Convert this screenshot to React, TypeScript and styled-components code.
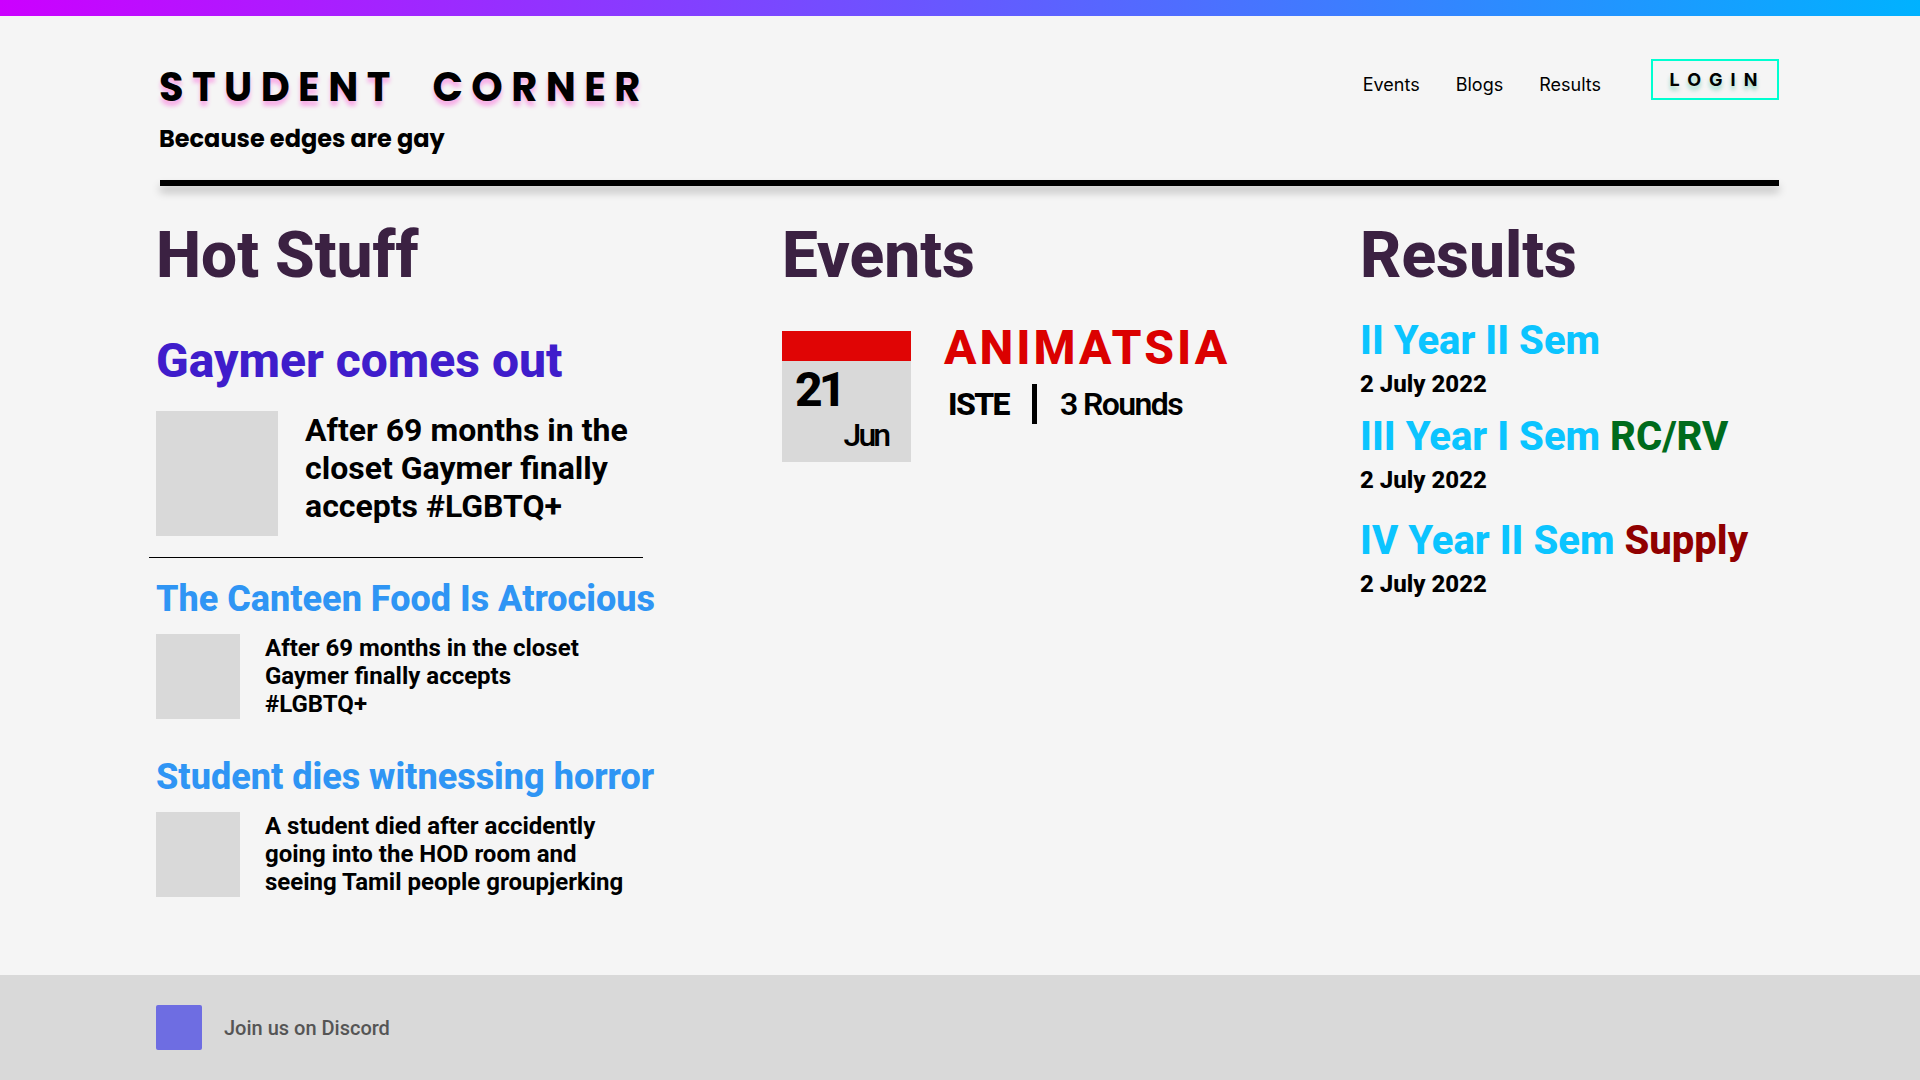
import React from "react";
import styled, { createGlobalStyle } from "styled-components";

const GlobalStyle = createGlobalStyle`
  *, *::before, *::after { box-sizing: border-box; }
  body { margin: 0; background: #f5f5f5; color: #000; font-family: Roboto, "Liberation Sans", sans-serif; }
  h1, h2, h3, p { margin: 0; }
  a { color: inherit; text-decoration: none; }
`;

const Page = styled.div`
  display: flex;
  flex-direction: column;
  min-height: 100vh;
`;

const TopBar = styled.div`
  height: 16px;
  background: linear-gradient(90deg, #cc00ff, #00b2ff);
`;

const Header = styled.header`
  display: flex;
  justify-content: space-between;
  align-items: flex-start;
  margin: 0 141px 0 159px;
  padding: 43px 0 24px;
`;

const HeaderRule = styled.div`
  height: 6px;
  margin: 0 141px 0 160px;
  background: #000;
  box-shadow: 0 6px 8px rgba(0, 0, 0, 0.25);
`;

const Brand = styled.div`
  font-family: Poppins, Inter, "Liberation Sans", sans-serif;
`;

const SiteTitle = styled.h1`
  font-size: 40px;
  line-height: 56px;
  font-weight: 700;
  letter-spacing: 0.21em;
  white-space: pre;
  text-shadow: 0 5px 4px rgba(255, 0, 199, 0.3);
`;

const Tagline = styled.p`
  margin-top: 7px;
  font-size: 24px;
  line-height: 34px;
  font-weight: 700;
`;

const Nav = styled.nav`
  display: flex;
  align-items: flex-start;
  font-family: Inter, "Liberation Sans", sans-serif;
  font-size: 18px;
`;

const NavLinks = styled.div`
  display: flex;
  gap: 36px;
  margin-right: 50px;
  padding-top: 14px;
  line-height: 24px;
  font-weight: 400;
`;

const LoginButton = styled.button`
  width: 128px;
  height: 41px;
  padding: 0 0 0 5px;
  border: 2px solid #00ffd1;
  background: transparent;
  color: #000;
  font: 700 18px/24px Inter, "Liberation Sans", sans-serif;
  letter-spacing: 8px;
  text-shadow: 0 4px 4px rgba(0, 170, 130, 0.4);
  cursor: pointer;
`;

const Main = styled.main`
  display: grid;
  grid-template-columns: 626fr 578fr 419fr;
  margin: 0 141px 0 156px;
  padding: 32px 0 78px;
`;

const Column = styled.section`
  min-width: 0;
`;

const SectionTitle = styled.h2`
  font-size: 64px;
  line-height: 76px;
  font-weight: 800;
  color: #3b2142;
`;

const Article = styled.article<{ $lead?: boolean }>`
  margin-top: ${(p) => (p.$lead ? 39 : 37)}px;
  hr + & { margin-top: 20px; }
`;

const Headline = styled.h3<{ $lead?: boolean }>`
  font-size: ${(p) => (p.$lead ? 48 : 36)}px;
  line-height: ${(p) => (p.$lead ? 56 : 42)}px;
  font-weight: 800;
  color: ${(p) => (p.$lead ? "#3f1dcb" : "#2f95f4")};
  white-space: nowrap;
`;

const Story = styled.div<{ $lead?: boolean }>`
  display: flex;
  align-items: flex-start;
  gap: ${(p) => (p.$lead ? 27 : 25)}px;
  margin-top: ${(p) => (p.$lead ? 22 : 14)}px;
`;

const Thumb = styled.div<{ $lead?: boolean }>`
  flex: none;
  width: ${(p) => (p.$lead ? 122 : 84)}px;
  height: ${(p) => (p.$lead ? 125 : 85)}px;
  background: #d9d9d9;
`;

const Summary = styled.p<{ $lead?: boolean }>`
  max-width: ${(p) => (p.$lead ? 350 : 380)}px;
  font-size: ${(p) => (p.$lead ? 32 : 24)}px;
  line-height: ${(p) => (p.$lead ? 38 : 28)}px;
  font-weight: 700;
  white-space: pre-line;
`;

const Divider = styled.hr`
  width: 494px;
  height: 1px;
  margin: 21px 0 0 -7px;
  border: 0;
  background: #000;
`;

const EventRow = styled.article`
  display: flex;
  align-items: flex-start;
  gap: 33px;
  margin-top: 26px;
`;

const Calendar = styled.time`
  display: flex;
  flex-direction: column;
  width: 129px;
  height: 131px;
  margin-top: 11px;
  padding: 2px 23px 0 13px;
  border-top: 30px solid #e00505;
  background: #d9d9d9;
`;

const Day = styled.span`
  font-size: 48px;
  line-height: 54px;
  font-weight: 800;
  letter-spacing: -4px;
`;

const Month = styled.span`
  align-self: flex-end;
  font-size: 32px;
  line-height: 36px;
  font-weight: 500;
  letter-spacing: -3px;
`;

const EventTitle = styled.h3`
  font-size: 48px;
  line-height: 56px;
  font-weight: 800;
  letter-spacing: 3px;
  color: #db0000;
`;

const EventMeta = styled.p`
  display: flex;
  align-items: center;
  gap: 23px;
  margin-top: 8px;
  padding-left: 4px;
  font-size: 32px;
  line-height: 38px;
  font-weight: 600;
  letter-spacing: -0.05em;
`;

const Host = styled.strong`
  font-weight: 800;
`;

const MetaBar = styled.span`
  width: 5px;
  height: 40px;
  background: #000;
`;

const ResultList = styled.div`
  display: flex;
  flex-direction: column;
  gap: 15px;
  margin-top: 23px;
`;

const Result = styled.article<{ $spaced?: boolean }>`
  margin-top: ${(p) => (p.$spaced ? 8 : 0)}px;
`;

const ResultTitle = styled.h3`
  font-size: 40px;
  line-height: 48px;
  font-weight: 800;
  color: #0bc4ff;
  white-space: nowrap;
`;

const Tag = styled.span<{ $color?: string }>`
  color: ${(p) => p.$color};
`;

const ResultDate = styled.time`
  display: block;
  margin-top: 5px;
  font-size: 24px;
  line-height: 28px;
  font-weight: 800;
`;

const Footer = styled.footer`
  display: flex;
  align-items: center;
  min-height: 105px;
  margin-top: auto;
  padding: 0 156px;
  background: #d9d9d9;
`;

const DiscordLink = styled.a`
  display: flex;
  align-items: center;
  gap: 22px;
  font-size: 20px;
  line-height: 24px;
  font-weight: 500;
  color: #555;
`;

const DiscordMark = styled.span`
  width: 46px;
  height: 45px;
  border-radius: 2px;
  background: #6e6de2;
`;

const stories = [
  { title: "The Canteen Food Is Atrocious", text: "After 69 months in the closet\nGaymer finally accepts\n#LGBTQ+" },
  { title: "Student dies witnessing horror", text: "A student died after accidently\ngoing into the HOD room and\nseeing Tamil people groupjerking" },
];

const results = [
  { title: "II Year II Sem", date: "2 July 2022" },
  { title: "III Year I Sem", tag: "RC/RV", color: "#006b1c", date: "2 July 2022" },
  { title: "IV Year II Sem", tag: "Supply", color: "#900000", date: "2 July 2022", spaced: true },
];

export default function App() {
  return (
    <Page>
      <GlobalStyle />
      <TopBar />
      <Header>
        <Brand>
          <SiteTitle>STUDENT{"  "}CORNER</SiteTitle>
          <Tagline>Because edges are gay</Tagline>
        </Brand>
        <Nav>
          <NavLinks>
            <a href="#events">Events</a>
            <a href="#blogs">Blogs</a>
            <a href="#results">Results</a>
          </NavLinks>
          <LoginButton type="button">LOGIN</LoginButton>
        </Nav>
      </Header>
      <HeaderRule />
      <Main>
        <Column id="blogs">
          <SectionTitle>Hot Stuff</SectionTitle>
          <Article $lead>
            <Headline $lead>Gaymer comes out</Headline>
            <Story $lead>
              <Thumb $lead />
              <Summary $lead>After 69 months in the closet Gaymer finally accepts #LGBTQ+</Summary>
            </Story>
          </Article>
          <Divider />
          {stories.map((s) => (
            <Article key={s.title}>
              <Headline>{s.title}</Headline>
              <Story>
                <Thumb />
                <Summary>{s.text}</Summary>
              </Story>
            </Article>
          ))}
        </Column>
        <Column id="events">
          <SectionTitle>Events</SectionTitle>
          <EventRow>
            <Calendar dateTime="2022-06-21">
              <Day>21</Day>
              <Month>Jun</Month>
            </Calendar>
            <div>
              <EventTitle>ANIMATSIA</EventTitle>
              <EventMeta>
                <Host>ISTE</Host>
                <MetaBar />
                <span>3 Rounds</span>
              </EventMeta>
            </div>
          </EventRow>
        </Column>
        <Column id="results">
          <SectionTitle>Results</SectionTitle>
          <ResultList>
            {results.map((r) => (
              <Result key={r.title} $spaced={r.spaced}>
                <ResultTitle>
                  {r.title}
                  {r.tag && <Tag $color={r.color}> {r.tag}</Tag>}
                </ResultTitle>
                <ResultDate dateTime="2022-07-02">{r.date}</ResultDate>
              </Result>
            ))}
          </ResultList>
        </Column>
      </Main>
      <Footer>
        <DiscordLink href="#discord">
          <DiscordMark />
          Join us on Discord
        </DiscordLink>
      </Footer>
    </Page>
  );
}
